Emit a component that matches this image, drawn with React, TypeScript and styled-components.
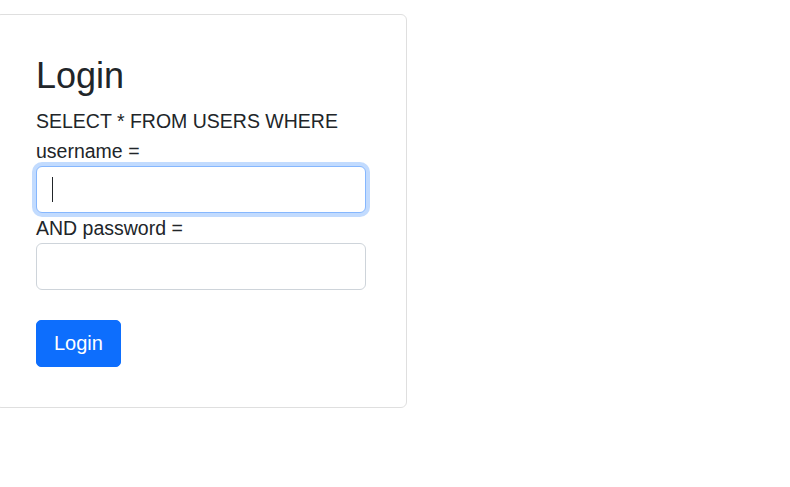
import React from 'react'
import styled, { createGlobalStyle } from 'styled-components'

const GlobalStyle = createGlobalStyle`
  html, body {
    margin: 0;
    padding: 0;
    background: #fff;
  }
  body {
    font-family: "Liberation Sans", Arial, sans-serif;
    color: #212529;
  }
  * {
    box-sizing: border-box;
  }
`

const Page = styled.div`
  padding-top: 14px;
  margin-left: -5px;
`

const Card = styled.div`
  width: 412px;
  padding: 40px;
  border: 1px solid #dfdfdf;
  border-radius: 6px;
  background: #fff;
`

const Title = styled.h1`
  margin: 0 0 10px;
  font-size: 36px;
  font-weight: 400;
  line-height: 41px;
`

const Form = styled.form`
  display: flex;
  flex-direction: column;
`

const Label = styled.label`
  display: block;
  font-size: 19.5px;
  line-height: 30px;
`

const Field = styled.div`
  position: relative;
`

const Input = styled.input<{ $focused?: boolean }>`
  display: block;
  width: 100%;
  height: 47px;
  padding: 8px 16px;
  font-family: inherit;
  font-size: 20px;
  color: #212529;
  background: #fff;
  border: 1px solid ${(p) => (p.$focused ? '#86b7fe' : '#ced4da')};
  border-radius: 6px;
  outline: none;
  caret-color: ${(p) => (p.$focused ? 'transparent' : '#212529')};
  box-shadow: ${(p) => (p.$focused ? '0 0 0 4px rgba(13, 110, 253, 0.25)' : 'none')};

  &:focus {
    border-color: #86b7fe;
    box-shadow: 0 0 0 4px rgba(13, 110, 253, 0.25);
  }
`

const Caret = styled.span`
  position: absolute;
  left: 16px;
  top: 11px;
  width: 1px;
  height: 25px;
  background: #212529;
  pointer-events: none;
`

const Button = styled.button`
  align-self: flex-start;
  margin-top: 30px;
  height: 47px;
  padding: 0 17px;
  font-family: inherit;
  font-size: 20px;
  color: #fff;
  background: #0d6efd;
  border: 1px solid #0d6efd;
  border-radius: 5px;
  cursor: pointer;
`

export default function App() {
  return (
    <>
      <GlobalStyle />
      <Page>
        <Card>
          <Title>Login</Title>
          <Form onSubmit={(e) => e.preventDefault()}>
            <Label htmlFor="username">SELECT * FROM USERS WHERE username =</Label>
            <Field>
              <Input id="username" type="text" autoFocus $focused />
              <Caret />
            </Field>
            <Label htmlFor="password">AND password =</Label>
            <Field>
              <Input id="password" type="password" />
            </Field>
            <Button type="submit">Login</Button>
          </Form>
        </Card>
      </Page>
    </>
  )
}
